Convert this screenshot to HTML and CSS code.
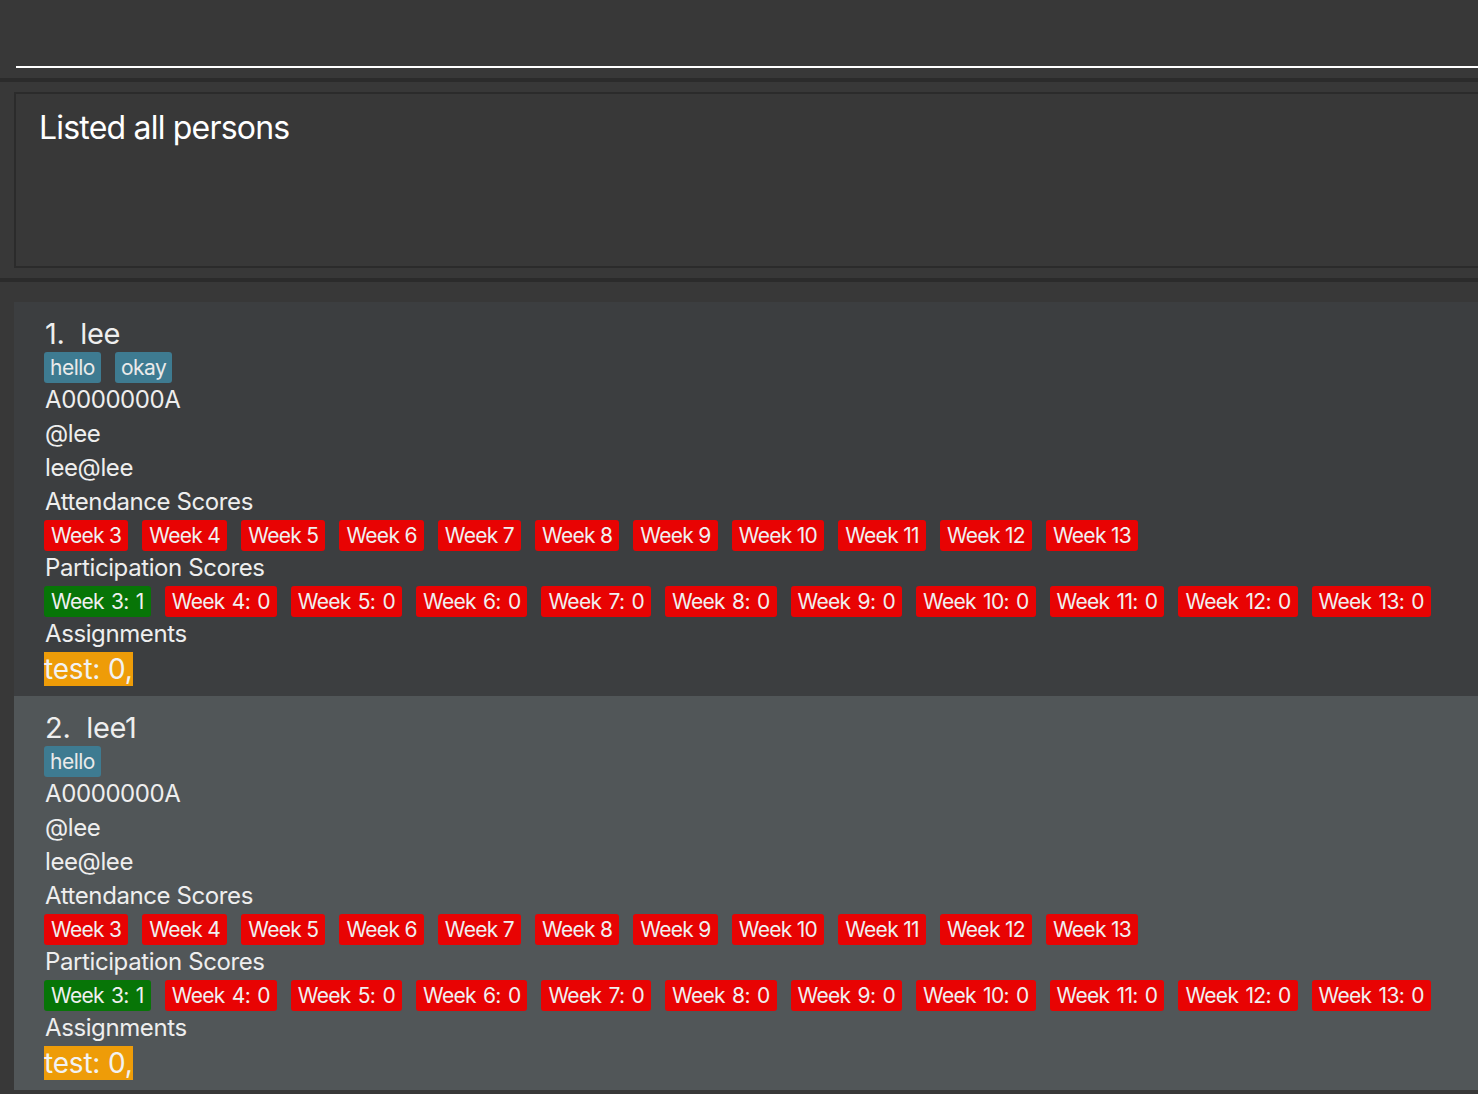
FILE: index.html
```html
<!DOCTYPE html>
<html>
<head>
<meta charset="utf-8">
<link rel="stylesheet" href="styles.css">
</head>
<body>
<div class="app">
  <div class="command-area"><div class="command-field"></div></div>
  <div class="divider"></div>
  <div class="result-area">
    <div class="result-box">Listed all persons</div>
  </div>
  <div class="divider"></div>
  <div class="list-area">
    <div class="card card-odd">
      <div class="name">1.&nbsp; lee</div>
      <div class="tags"><span class="tag">hello</span><span class="tag">okay</span></div>
      <div class="line">A0000000A</div>
      <div class="line">@lee</div>
      <div class="line">lee@lee</div>
      <div class="line">Attendance Scores</div>
      <div class="chips">
        <span class="chip red">Week 3</span><span class="chip red">Week 4</span><span class="chip red">Week 5</span><span class="chip red">Week 6</span><span class="chip red">Week 7</span><span class="chip red">Week 8</span><span class="chip red">Week 9</span><span class="chip red">Week 10</span><span class="chip red">Week 11</span><span class="chip red">Week 12</span><span class="chip red">Week 13</span>
      </div>
      <div class="line">Participation Scores</div>
      <div class="chips scores">
        <span class="chip green">Week 3: 1</span><span class="chip red">Week 4: 0</span><span class="chip red">Week 5: 0</span><span class="chip red">Week 6: 0</span><span class="chip red">Week 7: 0</span><span class="chip red">Week 8: 0</span><span class="chip red">Week 9: 0</span><span class="chip red">Week 10: 0</span><span class="chip red">Week 11: 0</span><span class="chip red">Week 12: 0</span><span class="chip red">Week 13: 0</span>
      </div>
      <div class="line">Assignments</div>
      <div class="assign-row"><span class="assign">test: 0,</span></div>
    </div>
    <div class="card card-even">
      <div class="name">2.&nbsp; lee1</div>
      <div class="tags"><span class="tag">hello</span></div>
      <div class="line">A0000000A</div>
      <div class="line">@lee</div>
      <div class="line">lee@lee</div>
      <div class="line">Attendance Scores</div>
      <div class="chips">
        <span class="chip red">Week 3</span><span class="chip red">Week 4</span><span class="chip red">Week 5</span><span class="chip red">Week 6</span><span class="chip red">Week 7</span><span class="chip red">Week 8</span><span class="chip red">Week 9</span><span class="chip red">Week 10</span><span class="chip red">Week 11</span><span class="chip red">Week 12</span><span class="chip red">Week 13</span>
      </div>
      <div class="line">Participation Scores</div>
      <div class="chips scores">
        <span class="chip green">Week 3: 1</span><span class="chip red">Week 4: 0</span><span class="chip red">Week 5: 0</span><span class="chip red">Week 6: 0</span><span class="chip red">Week 7: 0</span><span class="chip red">Week 8: 0</span><span class="chip red">Week 9: 0</span><span class="chip red">Week 10: 0</span><span class="chip red">Week 11: 0</span><span class="chip red">Week 12: 0</span><span class="chip red">Week 13: 0</span>
      </div>
      <div class="line">Assignments</div>
      <div class="assign-row"><span class="assign">test: 0,</span></div>
    </div>
  </div>
</div>
</body>
</html>
```
FILE: styles.css
```css
html, body {
  margin: 0;
  padding: 0;
  background: #383838;
  overflow: hidden;
}
.app {
  width: 1478px;
  height: 1094px;
  font-family: Inter, "Noto Sans", sans-serif;
  color: #eeeeee;
  display: flex;
  flex-direction: column;
}
.command-area {
  height: 78px;
  padding-left: 16px;
  box-sizing: border-box;
}
.command-field {
  height: 66px;
  border-bottom: 2px solid #ffffff;
}
.divider {
  height: 4px;
  background: #2b2b2b;
  flex: none;
}
.result-area {
  padding: 10px 0 10px 14px;
}
.result-box {
  height: 176px;
  box-sizing: border-box;
  border: 2px solid #2b2b2b;
  border-right: none;
  padding: 12px 0 0 23px;
  font-size: 32px;
  line-height: 44px;
  letter-spacing: -0.8px;
  color: #ffffff;
}
.list-area {
  padding: 20px 0 0 14px;
  flex: 1;
}
.card {
  padding: 15px 0 10px 30px;
}
.card-odd { background: #3c3e40; }
.card-even { background: #515658; }
.name {
  font-size: 29px;
  line-height: 33px;
  padding-bottom: 2px;
  letter-spacing: -0.3px;
  padding-left: 1px;
}
.tags {
  display: flex;
  gap: 14px;
  height: 31px;
}
.tag {
  background: #3e7b91;
  border-radius: 3px;
  padding: 0 6px;
  font-size: 21px;
  line-height: 31px;
  letter-spacing: -0.5px;
  color: #eaeaea;
}
.line {
  font-size: 24px;
  line-height: 34px;
  letter-spacing: -0.4px;
  padding-left: 1px;
}
.chips {
  display: flex;
  gap: 14px;
  margin-top: 1px;
  height: 31px;
  white-space: nowrap;
}
.chip {
  border-radius: 3px;
  padding: 0 7px;
  font-size: 21px;
  line-height: 31px;
  letter-spacing: -0.7px;
  color: #f0f0f0;
}
.scores .chip {
  word-spacing: 2px;
}
.red { background: #e80303; }
.green { background: #077507; }
.assign-row {
  display: flex;
  margin-top: 1px;
}
.assign {
  background: #ee9c08;
  font-size: 28px;
  line-height: 34px;
  letter-spacing: -0.2px;
  color: #f2f2f2;
}
```
